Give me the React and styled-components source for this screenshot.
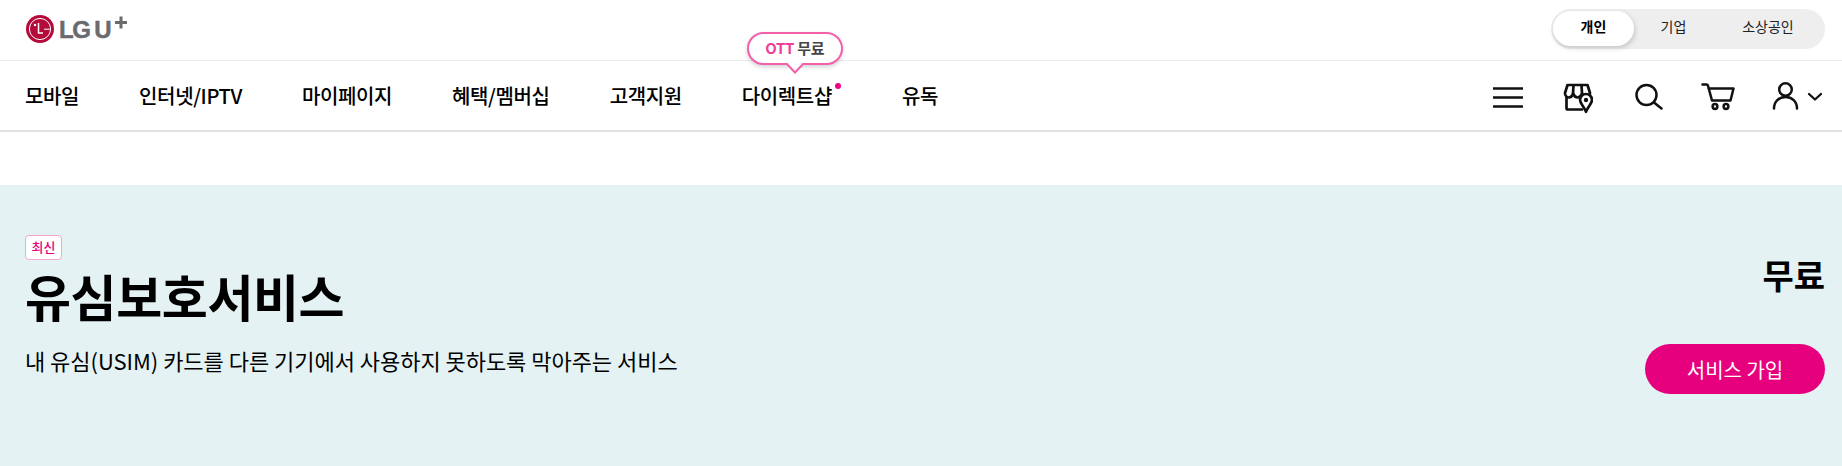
import React from "react";
import styled, { createGlobalStyle } from "styled-components";

const Global = createGlobalStyle`
  html, body { margin: 0; padding: 0; background: #fff; }
  body { font-family: "Noto Sans CJK KR", "Noto Sans", sans-serif; color: #000; }
  * { box-sizing: border-box; }
`;
const Page = styled.div`width: 1842px; height: 466px; overflow: hidden; display: flex; flex-direction: column;`;
const TopBar = styled.div`
  height: 61px; flex: none; padding: 9px 17px 0 26px; border-bottom: 1px solid #ececec;
  display: flex; justify-content: space-between; align-items: flex-start;
`;
const Logo = styled.div`display: flex; align-items: flex-start; height: 32px; margin-top: 6px;`;
const LogoText = styled.span`
  font-family: "Liberation Sans", sans-serif; font-weight: 700; font-size: 24px; line-height: 28px;
  color: #6b6b6d; letter-spacing: -1.4px; word-spacing: -0.5px; margin-left: 5px; margin-top: 1px; white-space: pre;
  -webkit-text-stroke: 0.5px #6b6b6d;
`;
const PlusMark = styled.svg`display: block; margin-left: 4px; margin-top: 1px;`;
const Segments = styled.div`
  width: 274px; height: 40px; border-radius: 20px; background: #eeeeee; padding: 2px;
  display: flex; align-items: flex-start;
`;
const Segment = styled.div`
  width: ${p => p.$w}px; height: 35px; border-radius: 18px; font-size: 14px; line-height: 31px;
  text-align: center; font-weight: ${p => (p.$on ? 700 : 400)}; color: ${p => (p.$on ? "#000" : "#222")};
  background: ${p => (p.$on ? "#fff" : "transparent")};
  box-shadow: ${p => (p.$on ? "1px 2px 5px rgba(0,0,0,.18)" : "none")};
`;
const NavBar = styled.div`
  height: 71px; flex: none; padding: 0 19px 0 25px; border-bottom: 2px solid #e2e2e2;
  display: flex; justify-content: space-between; align-items: center;
`;
const Menu = styled.nav`display: flex; gap: 60px; align-items: center;`;
const MenuItem = styled.div`
  position: relative; font-size: 20px; font-weight: 500; line-height: 28px; color: #000; white-space: nowrap;
  letter-spacing: -0.37px; margin-right: ${p => (p.$marked ? 10 : 0)}px;
`;
const Dot = styled.i`
  position: absolute; right: -9px; top: 1px; width: 6px; height: 6px; border-radius: 50%; background: #f0047f;
`;
const Bubble = styled.div`
  position: absolute; left: 5px; top: -50px; width: 96px; height: 33px; background: #fff;
  border: 2px solid #f35fa9; border-radius: 17px; font-size: 15px; line-height: 28px; font-weight: 700;
  text-align: center; color: #444; box-shadow: 0 2px 4px rgba(0,0,0,.18); letter-spacing: -0.3px;
`;
const BubbleAccent = styled.span`color: #ef3f98;`;
const BubbleTail = styled.svg`position: absolute; left: 37px; top: 29px; display: block;`;
const Icons = styled.div`display: flex; align-items: center;`;
const IconSlot = styled.div`
  display: flex; width: ${p => p.$w}px; height: 36px; margin-left: ${p => p.$ml || 0}px;
`;
const Spacer = styled.div`height: 53px; flex: none; background: #fff;`;
const Hero = styled.section`
  flex: 1; background: #e4f2f4; padding: 50px 17px 0 25px; display: flex; justify-content: space-between;
`;
const HeroLeft = styled.div`display: flex; flex-direction: column; align-items: flex-start;`;
const Badge = styled.span`
  width: 37px; height: 25px; border: 1px solid #f6a6cc; border-radius: 4px; background: #fff; color: #e6007e;
  font-size: 13px; font-weight: 500; line-height: 22px; text-align: center;
`;
const Title = styled.h1`
  margin: 0; font-size: 50px; font-weight: 700; line-height: 70px; color: #000; letter-spacing: -0.4px;
`;
const Sub = styled.p`
  margin: 14px 0 0; font-size: 22px; line-height: 32px; font-weight: 400; color: #000; letter-spacing: -0.03px;
`;
const HeroRight = styled.div`display: flex; flex-direction: column; align-items: flex-end;`;
const Price = styled.div`margin-top: 17px; font-size: 34px; font-weight: 700; line-height: 46px; color: #000;`;
const Join = styled.button`
  margin-top: 46px; width: 180px; height: 50px; border: 0; border-radius: 25px; background: #e6007e; color: #fff;
  font-family: inherit; font-size: 20px; font-weight: 400; padding: 0;
`;

const LgMark = () => (
  <svg width="28" height="28" viewBox="0 0 28 28">
    <circle cx="14" cy="14" r="14" fill="#b40b3c" />
    <circle cx="14" cy="14" r="10.6" fill="none" stroke="#fff" strokeWidth="1" />
    <path d="M12.5 8v10h4.5" fill="none" stroke="#fff" strokeWidth="1.5" />
    <circle cx="9" cy="10" r="1.2" fill="#fff" />
    <path d="M16 14h8" stroke="#b40b3c" strokeWidth="3" />
    <path d="M18 14.2h6.5" stroke="#fff" strokeWidth="1" />
  </svg>
);
const Plus = () => (
  <PlusMark width="14" height="14" viewBox="0 0 14 14">
    <path d="M7 .5v12M1 6.500h12" stroke="#6b6b6d" strokeWidth="3" />
  </PlusMark>
);
const Hamburger = () => (
  <svg width="30" height="36" viewBox="0 0 30 36">
    <path d="M0 10.500h30M0 19.500h30M0 28.500h30" stroke="#111" strokeWidth="2.400" />
  </svg>
);
const Store = () => (
  <svg width="30" height="36" viewBox="0 0 30 36" fill="none" stroke="#111" strokeWidth="2.700" strokeLinejoin="round" strokeLinecap="round">
    <path d="M3.500 19.500V30a1.500 1.500 0 0 0 1.500 1.500H19" />
    <path d="M4.500 7H24.500L27 15c0 2.500-1.700 4.500-3.800 4.500S19.700 17.500 19 15.500c-.7 2-2.200 4-4.400 4s-3.700-2-4.400-4c-.7 2-2.200 4-4.300 4S2 17.500 2 15z" />
    <path d="M10.500 7.500 10 15M18.500 7.500 19 15" />
    <path d="M23 16c-3.300 0-6 2.500-6 5.800 0 3.800 4 6.500 6 12 2-5.500 6-8.200 6-12 0-3.300-2.700-5.800-6-5.800z" fill="#fff" />
    <circle cx="23" cy="22" r="2.200" fill="#111" stroke="none" />
  </svg>
);
const Search = () => (
  <svg width="28" height="36" viewBox="0 0 28 36" fill="none" stroke="#111" strokeWidth="2.500" strokeLinecap="round">
    <circle cx="11.500" cy="17" r="10" /><path d="M19 24.500l7.500 6" />
  </svg>
);
const Cart = () => (
  <svg width="34" height="36" viewBox="0 0 34 36" fill="none" stroke="#111" strokeWidth="2.500" strokeLinecap="round" strokeLinejoin="round">
    <path d="M1.500 6.500H5.500c.8 0 1.300.4 1.500 1.200L11 22.500H29.500L32.500 10.500H7.500" />
    <circle cx="14" cy="28.500" r="2.400" /><circle cx="25" cy="28.500" r="2.400" />
  </svg>
);
const User = () => (
  <svg width="27" height="36" viewBox="0 0 27 36" fill="none" stroke="#111" strokeWidth="2.500" strokeLinecap="round">
    <circle cx="13.500" cy="11.500" r="6.300" /><path d="M2 30.500c0-7 5-11.500 11.500-11.500S25 23.500 25 30.500" />
  </svg>
);
const Chevron = () => (
  <svg width="16" height="36" viewBox="0 0 16 36" fill="none" stroke="#111" strokeWidth="2.300" strokeLinecap="round" strokeLinejoin="round">
    <path d="M2 16l6 5.500 6-5.500" />
  </svg>
);

const items = ["모바일", "인터넷/IPTV", "마이페이지", "혜택/멤버십", "고객지원", "다이렉트샵", "유독"];

export default function App() {
  return (
    <Page>
      <Global />
      <TopBar>
        <Logo>
          <LgMark />
          <LogoText>LG U</LogoText>
          <Plus />
        </Logo>
        <Segments>
          <Segment $w={81} $on>개인</Segment>
          <Segment $w={79}>기업</Segment>
          <Segment $w={110}>소상공인</Segment>
        </Segments>
      </TopBar>
      <NavBar>
        <Menu>
          {items.map(t => (
            <MenuItem key={t} $marked={t === "다이렉트샵"}>
              {t}
              {t === "다이렉트샵" && (
                <>
                  <Dot />
                  <Bubble>
                    <BubbleAccent>OTT</BubbleAccent> 무료
                    <BubbleTail width="18" height="11" viewBox="0 0 18 11">
                      <path d="M0 0 9 9.500 18 0" fill="#fff" stroke="#f35fa9" strokeWidth="2" />
                    </BubbleTail>
                  </Bubble>
                </>
              )}
            </MenuItem>
          ))}
        </Menu>
        <Icons>
          <IconSlot $w={30}><Hamburger /></IconSlot>
          <IconSlot $w={30} $ml={40}><Store /></IconSlot>
          <IconSlot $w={28} $ml={42}><Search /></IconSlot>
          <IconSlot $w={34} $ml={38}><Cart /></IconSlot>
          <IconSlot $w={27} $ml={37}><User /></IconSlot>
          <IconSlot $w={16} $ml={8}><Chevron /></IconSlot>
        </Icons>
      </NavBar>
      <Spacer />
      <Hero>
        <HeroLeft>
          <Badge>최신</Badge>
          <Title>유심보호서비스</Title>
          <Sub>내 유심(USIM) 카드를 다른 기기에서 사용하지 못하도록 막아주는 서비스</Sub>
        </HeroLeft>
        <HeroRight>
          <Price>무료</Price>
          <Join>서비스 가입</Join>
        </HeroRight>
      </Hero>
    </Page>
  );
}
